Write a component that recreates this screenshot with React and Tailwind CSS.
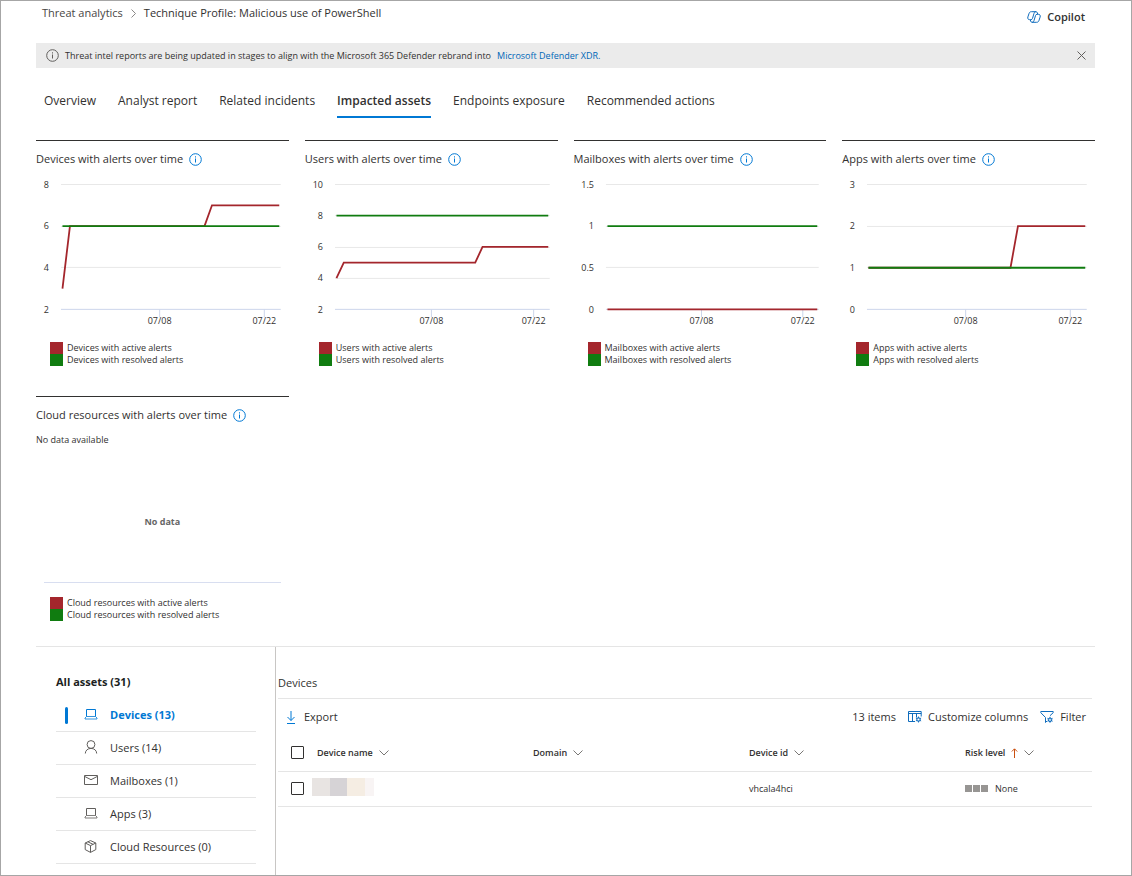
import { useState } from "react";
import clsx from "clsx";

const RED = "#a4262c";
const GREEN = "#107c10";

const TABS = [
  "Overview",
  "Analyst report",
  "Related incidents",
  "Impacted assets",
  "Endpoints exposure",
  "Recommended actions",
];

// active / resolved are [day, value] points, day 0 to 29
const CHARTS = [
  {
    name: "Devices",
    left: 25,
    ticks: [2, 4, 6, 8],
    active: [[0, 3], [1, 6], [19, 6], [20, 7], [29, 7]],
    resolved: [[0, 6], [29, 6]],
  },
  {
    name: "Users",
    left: 30,
    ticks: [2, 4, 6, 8, 10],
    active: [[0, 4], [1, 5], [19, 5], [20, 6], [29, 6]],
    resolved: [[0, 8], [29, 8]],
  },
  {
    name: "Mailboxes",
    left: 32,
    ticks: [0, 0.5, 1, 1.5],
    active: [[0, 0], [29, 0]],
    resolved: [[0, 1], [29, 1]],
  },
  {
    name: "Apps",
    left: 25,
    ticks: [0, 1, 2, 3],
    active: [[0, 1], [19, 1], [20, 2], [29, 2]],
    resolved: [[0, 1], [29, 1]],
  },
];

const ASSETS = [
  { label: "Devices", count: 13, icon: LaptopIcon },
  { label: "Users", count: 14, icon: UserIcon },
  { label: "Mailboxes", count: 1, icon: MailIcon },
  { label: "Apps", count: 3, icon: LaptopIcon },
  { label: "Cloud Resources", count: 0, icon: CubeIcon },
];

function InfoIcon({ className }) {
  return (
    <svg className={className} width="13" height="13" viewBox="0 0 13 13" fill="none" stroke="currentColor">
      <circle cx="6.5" cy="6.5" r="5.8" />
      <path d="M6.5 5.5v4M6.5 3.3v1.2" />
    </svg>
  );
}

function CopilotIcon() {
  return (
    <svg width="14" height="12" viewBox="0 0 14 12" fill="none" stroke="#0f6cbd" strokeLinejoin="round">
      <path d="M9 .7H4.400C3.300.7 2.500 1.200 2.100 2.300L.9 5.900c-.5 1.600.2 2.800 1.700 2.800h1.300c.8 0 1.400-.5 1.600-1.300l1.500-5C7.300 1.300 8 .7 9 .7c.7 0 1.100.4 1.300 1.100l.4 1.500" />
      <path d="M5 11.300h4.600c1.100 0 1.900-.5 2.300-1.600l1.200-3.600c.5-1.600-.2-2.800-1.700-2.800h-1.300c-.8 0-1.400.5-1.600 1.300L7 9.600c-.3 1.100-1 1.700-2 1.700-.7 0-1.100-.4-1.300-1.100l-.4-1.500" />
    </svg>
  );
}

function CloseIcon() {
  return (
    <svg width="9" height="9" viewBox="0 0 9 9" fill="none" stroke="#605e5c">
      <path d="M.5.5l8 8M8.500.5l-8 8" />
    </svg>
  );
}

function ChevronRight() {
  return (
    <svg width="5" height="9" viewBox="0 0 5 9" fill="none" stroke="#8a8886">
      <path d="M.5.5l4 4-4 4" />
    </svg>
  );
}

function ChevronDown() {
  return (
    <svg width="10" height="6" viewBox="0 0 10 6" fill="none" stroke="#797775">
      <path d="M.5.5L5 5 9.500.5" />
    </svg>
  );
}

function LaptopIcon() {
  return (
    <svg width="14" height="11" viewBox="0 0 14 11" fill="none" stroke="currentColor">
      <path d="M2.500 7.500v-7h9v7" />
      <path d="M2.500 7.500h9l1.500 1.500v1H1V9z" strokeWidth=".8" />
    </svg>
  );
}

function UserIcon() {
  return (
    <svg width="14" height="14" viewBox="0 0 14 14" fill="none" stroke="currentColor">
      <circle cx="7" cy="4.500" r="3.900" />
      <path d="M1.300 13.500c0-3 2.500-5.100 5.700-5.100s5.700 2.100 5.700 5.100" />
    </svg>
  );
}

function MailIcon() {
  return (
    <svg width="14" height="10" viewBox="0 0 14 10" fill="none" stroke="currentColor">
      <path d="M.5.5h13v9H.5z" />
      <path d="M.8 1.500L7 4.700l6.200-3.200" />
    </svg>
  );
}

function CubeIcon() {
  return (
    <svg width="14" height="13" viewBox="0 0 14 13" fill="none" stroke="currentColor" strokeLinejoin="round">
      <path d="M6.500.6l5.300 2.400v6.600l-5.300 2.800-5.300-2.800V3z" />
      <path d="M1.200 3l5.300 2.600L11.800 3M6.500 5.600v6.800M3.800 1.800l5.400 2.600" />
    </svg>
  );
}

function DownloadIcon() {
  return (
    <svg width="10" height="13" viewBox="0 0 10 13" fill="none" stroke="#0078d4">
      <path d="M5 0v9.500M1.500 6L5 9.500 8.500 6M1 12.500h8" />
    </svg>
  );
}

function Gear({ x, y }) {
  return (
    <g transform={`translate(${x} ${y})`}>
      <circle r="1.800" fill="white" />
      <path d="M0-3v6M-2.600-1.500l5.200 3M-2.600 1.500l5.200-3" strokeWidth=".9" />
      <circle r=".9" fill="white" stroke="none" />
    </g>
  );
}

function ColumnsIcon() {
  return (
    <svg width="14" height="12" viewBox="0 0 14 12" fill="none" stroke="#0f6cbd">
      <path d="M7 10.500H.5V.5h12.700v5M.5 2.500h12.700M4.500 2.500v8M8.500 2.500v4" />
      <Gear x={10.5} y={8.5} />
    </svg>
  );
}

function FilterIcon() {
  return (
    <svg width="14" height="13" viewBox="0 0 14 13" fill="none" stroke="#0f6cbd">
      <path d="M7 10L5.500 11.500V6.500L.8 1.700V.5h12.400v1.200L10 4.700" />
      <Gear x={10} y={8.8} />
    </svg>
  );
}

function Legend({ name }) {
  return (
    <ul className="pl-3.5 text-[9px] leading-3 text-[#323130]">
      <li className="flex items-center gap-1">
        <span className="h-3 w-[13px] bg-[#a4262c]" />
        {name} with active alerts
      </li>
      <li className="flex items-center gap-1">
        <span className="h-3 w-[13px] bg-[#107c10]" />
        {name} with resolved alerts
      </li>
    </ul>
  );
}

function ChartCard({ name, children }) {
  return (
    <section className="border-t border-[#323130] pt-2">
      <h2 className="flex h-5 items-center gap-1.5 text-[11px] font-medium text-[#323130]">
        {name} with alerts over time
        <InfoIcon className="text-[#0078d4]" />
      </h2>
      {children}
      <Legend name={name} />
    </section>
  );
}

function LineChart({ left, ticks, active, resolved }) {
  const right = 245;
  const top = 15.5;
  const bottom = 140.5;
  const min = ticks[0];
  const max = ticks[ticks.length - 1];
  const x = (day) => left + 1.5 + (day * (right - left - 3)) / 29;
  const y = (value) => bottom - ((value - min) / (max - min)) * (bottom - top);
  const points = (list) => list.map(([d, v]) => `${x(d)},${y(v)}`).join(" ");

  return (
    <svg className="h-[173px] w-full" viewBox="0 0 253 173" preserveAspectRatio="xMinYMin meet" role="img">
      {ticks.map((tick) => (
        <g key={tick}>
          <line
            x1={left}
            x2={right}
            y1={Math.floor(y(tick)) + 0.5}
            y2={Math.floor(y(tick)) + 0.5}
            stroke={tick === min ? "#ccd6eb" : "#e8e8e8"}
          />
          <text x={left - 12} y={Math.round(y(tick)) + 3} textAnchor="end" fontSize="9" fill="#323130">
            {tick}
          </text>
        </g>
      ))}
      {[[13, "07/08"], [27, "07/22"]].map(([day, label]) => (
        <g key={day}>
          <line x1={x(day)} x2={x(day)} y1={bottom} y2={bottom + 8} stroke="#ccd6eb" />
          <text x={x(day)} y={bottom + 15} textAnchor="middle" fontSize="9" fill="#323130">
            {label}
          </text>
        </g>
      ))}
      <polyline points={points(active)} fill="none" stroke={RED} strokeWidth="1.800" />
      <polyline points={points(resolved)} fill="none" stroke={GREEN} strokeWidth="1.800" />
    </svg>
  );
}

function SortHeader({ children, sorted }) {
  return (
    <th className="p-0 text-left font-semibold">
      <button className="flex items-center gap-1.5">
        {children}
        {sorted && (
          <svg width="7" height="10" viewBox="0 0 7 10" fill="none" stroke="#ca5010">
            <path d="M3.500 10V1M.8 3.500L3.500.8l2.700 2.700" />
          </svg>
        )}
        <ChevronDown />
      </button>
    </th>
  );
}

function Checkbox({ label }) {
  return (
    <input
      type="checkbox"
      aria-label={label}
      className="ml-[13px] block h-[13px] w-[13px] appearance-none rounded-[1px] border border-[#323130] bg-white checked:bg-[#0078d4]"
    />
  );
}

export default function App() {
  const [tab, setTab] = useState("Impacted assets");
  const [asset, setAsset] = useState("Devices");

  return (
    <div className="flex min-h-screen flex-col border border-[#a6a6a6] bg-white pr-9 pl-[35px] font-['Open_Sans',sans-serif] text-[#323130]">
      <header className="flex h-[42px] items-start justify-between">
        <nav className="flex items-center gap-2 pt-1 pl-1.5 text-[11px] leading-4">
          <a href="#threats" className="text-[#484644]">Threat analytics</a>
          <ChevronRight />
          <span>Technique Profile: Malicious use of PowerShell</span>
        </nav>
        <button className="flex items-center gap-1.5 pt-2 pr-2.5 text-[11px] leading-4 font-semibold">
          <CopilotIcon />
          Copilot
        </button>
      </header>

      <div className="flex h-[25px] items-center bg-[#ebebeb] pr-[9px] pl-2.5 text-[9px]">
        <InfoIcon className="mr-1.5 text-[#605e5c]" />
        <p>
          Threat intel reports are being updated in stages to align with the Microsoft 365 Defender rebrand into
          <a href="#xdr" className="ml-1.5 text-[#0067b8]">Microsoft Defender XDR.</a>
        </p>
        <button aria-label="Dismiss" className="ml-auto">
          <CloseIcon />
        </button>
      </div>

      <div role="tablist" className="mt-[18px] flex gap-[22px] pl-2 text-[12px]">
        {TABS.map((t) => (
          <button
            key={t}
            role="tab"
            aria-selected={tab === t}
            onClick={() => setTab(t)}
            className={clsx(
              "h-8 border-b-2",
              tab === t ? "border-[#0078d4] font-semibold" : "border-transparent"
            )}
          >
            {t}
          </button>
        ))}
      </div>

      <div className="mt-[22px] grid grid-cols-4 gap-x-4 gap-y-[30px]">
        {CHARTS.map((chart) => (
          <ChartCard key={chart.name} name={chart.name}>
            <LineChart {...chart} />
          </ChartCard>
        ))}
        <ChartCard name="Cloud resources">
          <p className="mt-[7px] text-[9px] leading-4">No data available</p>
          <div className="mx-2 mb-[14px] flex h-[135px] items-center justify-center border-b border-[#d8def0] pt-3.5 text-[9px] font-bold text-[#666666]">
            No data
          </div>
        </ChartCard>
      </div>

      <div className="mt-[25px] flex flex-1 border-t border-[#e5e5e5]">
        <aside className="w-60 shrink-0 border-r border-[#c8c6c4] pr-[19px] pb-2 pl-5">
          <h2 className="pt-[26px] text-[11px] leading-[18px] font-bold text-[#201f1e]">All assets (31)</h2>
          <ul className="mt-2">
            {ASSETS.map(({ label, count, icon: Icon }) => (
              <li key={label} className="border-b border-[#e5e5e5]">
                <button
                  onClick={() => setAsset(label)}
                  className={clsx(
                    "flex h-8 w-full items-center text-[11px]",
                    asset === label && "font-bold text-[#0078d4]"
                  )}
                >
                  <span
                    className={clsx("ml-[9px] h-[17px] w-[3px] rounded-sm", asset === label && "bg-[#0078d4]")}
                  />
                  <span className={clsx("mr-3 ml-4 pb-0.5", asset !== label && "text-[#605e5c]")}>
                    <Icon />
                  </span>
                  {label} ({count})
                </button>
              </li>
            ))}
          </ul>
        </aside>

        <main className="min-w-0 flex-1 pr-[3px] pl-0.5">
          <h2 className="border-b border-[#e5e5e5] pt-[27px] pb-[7px] text-[11px] leading-[17px]">Devices</h2>
          <div className="flex h-9 items-center gap-3 pr-1.5 pl-2 text-[11px]">
            <button className="mr-auto flex items-center gap-2">
              <DownloadIcon />
              Export
            </button>
            <span>13 items</span>
            <button className="flex items-center gap-1.5">
              <ColumnsIcon />
              Customize columns
            </button>
            <button className="flex items-center gap-1.5">
              <FilterIcon />
              Filter
            </button>
          </div>
          <table className="w-full table-fixed text-left text-[9px]">
            <colgroup>
              <col className="w-[39px]" />
              <col className="w-[216px]" />
              <col className="w-[216px]" />
              <col className="w-[216px]" />
              <col />
            </colgroup>
            <thead>
              <tr className="h-9 border-b border-[#e5e5e5]">
                <th className="p-0">
                  <Checkbox label="Select all devices" />
                </th>
                <SortHeader>Device name</SortHeader>
                <SortHeader>Domain</SortHeader>
                <SortHeader>Device id</SortHeader>
                <SortHeader sorted>Risk level</SortHeader>
              </tr>
            </thead>
            <tbody>
              <tr className="h-[35px] border-b border-[#e5e5e5]">
                <td className="p-0">
                  <Checkbox label="Select vhcala4hci" />
                </td>
                <td className="p-0">
                  {/* masked device name */}
                  <div className="mb-1 -ml-[5px] flex h-[18px]">
                    <span className="w-[18px] bg-[#e8e4e2]" />
                    <span className="w-[17px] bg-[#d6d3d6]" />
                    <span className="w-[18px] bg-[#f5ede3]" />
                    <span className="w-[9px] bg-[#f8f4f4]" />
                  </div>
                </td>
                <td className="p-0" />
                <td className="p-0">vhcala4hci</td>
                <td className="p-0">
                  <div className="flex items-center gap-px">
                    <span className="h-[7px] w-[7px] bg-[#979593]" />
                    <span className="h-[7px] w-[7px] bg-[#979593]" />
                    <span className="h-[7px] w-[7px] bg-[#979593]" />
                    <span className="ml-1.5">None</span>
                  </div>
                </td>
              </tr>
            </tbody>
          </table>
        </main>
      </div>
    </div>
  );
}
